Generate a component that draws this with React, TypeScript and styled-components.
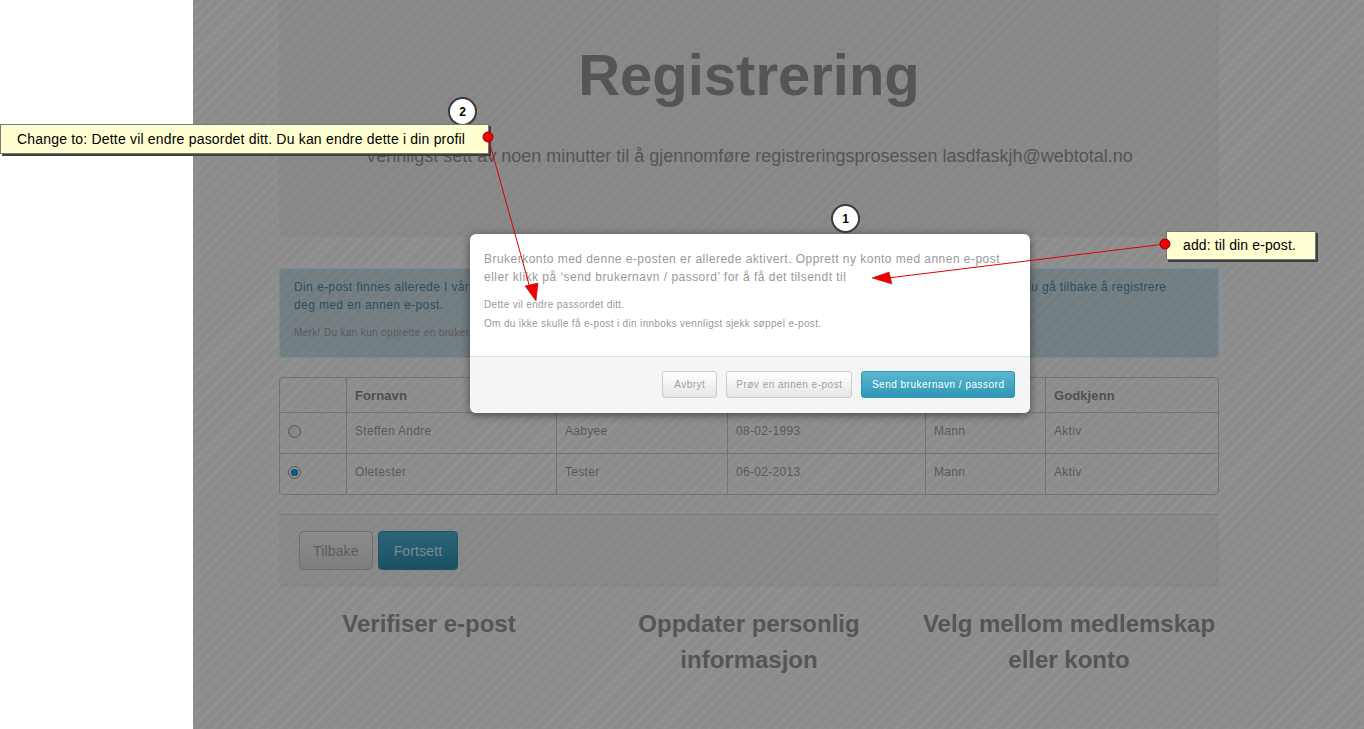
import styled, { createGlobalStyle } from "styled-components";

const GlobalStyle = createGlobalStyle`
  html, body {
    margin: 0;
    height: 100%;
    background: #fff;
    font-family: "Liberation Sans", Arial, sans-serif;
    overflow: hidden;
  }
`;

const Page = styled.div`
  position: relative;
  display: flex;
  width: 1364px;
  height: 729px;
  overflow: hidden;
`;

const Sidebar = styled.div`
  width: 193px;
  flex: none;
  background: #fff;
`;

const Main = styled.main`
  flex: 1;
  padding-left: 86px;
  background: repeating-linear-gradient(135deg, #8c8c8c 0 5.4px, #919191 5.4px 7.8px);
`;

const Container = styled.div`
  width: 940px;
  display: flex;
  flex-direction: column;
`;

const Hero = styled.header`
  height: 237px;
  box-sizing: border-box;
  padding-top: 37px;
  border-radius: 0 0 6px 6px;
  background: rgba(0, 0, 0, 0.035);
  text-align: center;
`;

const Title = styled.h1`
  margin: 0;
  font-size: 58px;
  line-height: 76px;
  font-weight: bold;
  color: #555;
`;

const Lead = styled.p`
  margin: 30px 0 0;
  font-size: 18px;
  line-height: 27px;
  color: #545454;
`;

const Alert = styled.div`
  margin-top: 31px;
  height: 90px;
  box-sizing: border-box;
  padding: 9px 14px;
  border: 1px solid #6f8c97;
  border-radius: 4px;
  background: rgba(25, 75, 90, 0.22);
  color: #2a4f63;
  font-size: 12px;
  line-height: 18px;
  letter-spacing: 0.39px;
  white-space: nowrap;
`;

const AlertNote = styled.p`
  margin: 10px 0 0;
  font-size: 10px;
  letter-spacing: 0.35px;
  color: #5a5a5a;
`;

const Table = styled.table`
  margin-top: 19px;
  width: 940px;
  border-collapse: separate;
  border-spacing: 0;
  table-layout: fixed;
  border: 1px solid #727272;
  border-radius: 4px;
  font-size: 12px;
  letter-spacing: 0.3px;
  color: #595959;
`;

const HeadCell = styled.th`
  height: 34px;
  padding: 0 8px;
  text-align: left;
  font-weight: bold;
  font-size: 13px;
  letter-spacing: 0.1px;
  color: #4f4f4f;
  border-left: 1px solid #727272;
  &:first-child {
    border-left: 0;
  }
`;

const Cell = styled.td`
  height: 35px;
  padding: 0 8px 5px;
  border-top: 1px solid #727272;
  border-left: 1px solid #727272;
  &:first-child {
    border-left: 0;
    padding-bottom: 4px;
  }
`;

const Radio = styled.span<{ $checked?: boolean }>`
  display: block;
  width: 13px;
  height: 13px;
  border-radius: 50%;
  border: 1px solid #555;
  box-sizing: border-box;
  background: ${(p) =>
    p.$checked
      ? "radial-gradient(circle, #0f5a7c 0 3.5px, #8e8e8e 4px)"
      : "radial-gradient(circle at 60% 60%, #8e8e8e, #7c7c7c)"};
`;

const Actions = styled.div`
  margin-top: 19px;
  height: 73px;
  box-sizing: border-box;
  padding: 16px 20px;
  display: flex;
  gap: 5px;
  border-top: 1px solid #7a7a7a;
  background: rgba(0, 0, 0, 0.035);
`;

const PageButton = styled.button<{ $primary?: boolean }>`
  height: 39px;
  padding: 0 ${(p) => (p.$primary ? 15 : 13)}px;
  border-radius: 4px;
  font: 14px "Liberation Sans", Arial, sans-serif;
  letter-spacing: 0.15px;
  border: 1px solid ${(p) => (p.$primary ? "#1f5468" : "#6e6e6e")};
  color: ${(p) => (p.$primary ? "#7d8b90" : "#5d5d5d")};
  background: ${(p) =>
    p.$primary
      ? "linear-gradient(#2a6579, #1b5064)"
      : "linear-gradient(#8b8b8b, #7e7e7e)"};
`;

const Features = styled.section`
  margin-top: 19px;
  display: grid;
  grid-template-columns: repeat(3, 300px);
  column-gap: 20px;
  text-align: center;
`;

const FeatureTitle = styled.h2`
  margin: 0;
  font-size: 24px;
  line-height: 36px;
  font-weight: bold;
  color: #555;
`;

const Modal = styled.div`
  position: absolute;
  left: 470px;
  top: 234px;
  width: 560px;
  height: 179px;
  display: flex;
  flex-direction: column;
  border-radius: 6px;
  background: #fff;
  box-shadow: 0 2px 8px rgba(0, 0, 0, 0.5);
  overflow: hidden;
`;

const ModalBody = styled.div`
  height: 123px;
  box-sizing: border-box;
  padding: 16px 14px 0;
  border-bottom: 1px solid #ddd;
  color: #999;
`;

const ModalLead = styled.p`
  margin: 0 0 9px;
  font-size: 12px;
  line-height: 18px;
  letter-spacing: 0.47px;
`;

const ModalSmall = styled.p`
  margin: 0;
  font-size: 10px;
  line-height: 19px;
  letter-spacing: 0.34px;
`;

const ModalFooter = styled.div`
  flex: 1;
  display: flex;
  justify-content: flex-end;
  align-items: flex-start;
  gap: 9px;
  padding: 14px 15px 0;
  background: #f5f5f5;
`;

const ModalButton = styled.button<{ $primary?: boolean }>`
  height: 27px;
  min-width: 55px;
  padding: 0 ${(p) => (p.$primary ? 9.5 : 9)}px;
  border-radius: 3px;
  font: 10px "Liberation Sans", Arial, sans-serif;
  letter-spacing: 0.5px;
  border: 1px solid ${(p) => (p.$primary ? "#2f96b4" : "#ccc")};
  color: ${(p) => (p.$primary ? "#fff" : "#a0a0a0")};
  background: ${(p) =>
    p.$primary
      ? "linear-gradient(#5bb8d2, #2f96b4)"
      : "linear-gradient(#fff, #e6e6e6)"};
`;

const Note = styled.div<{ $left: number; $top: number; $width: number; $height: number; $spacing: number; $lift: number }>`
  position: absolute;
  left: ${(p) => p.$left}px;
  top: ${(p) => p.$top}px;
  width: ${(p) => p.$width}px;
  height: ${(p) => p.$height}px;
  box-sizing: border-box;
  padding: 0 0 ${(p) => p.$lift}px 16px;
  display: flex;
  align-items: center;
  white-space: nowrap;
  background: #ffffd2;
  border: 1px solid #777;
  box-shadow: 2px 2px 0 #3f3f3f;
  color: #000;
  font-size: 14px;
  letter-spacing: ${(p) => p.$spacing}px;
`;

const Marker = styled.div<{ $left: number; $top: number }>`
  position: absolute;
  left: ${(p) => p.$left}px;
  top: ${(p) => p.$top}px;
  width: 29px;
  height: 29px;
  box-sizing: border-box;
  border-radius: 50%;
  background: #fff;
  border: 2px solid #3a3a3a;
  display: flex;
  align-items: center;
  justify-content: center;
  color: #000;
  font-size: 12px;
  font-weight: bold;
`;

const Arrows = styled.svg`
  position: absolute;
  left: 0;
  top: 0;
  pointer-events: none;
`;

const widths = [66, 210, 171, 198, 120, 173];
const heads = ["", "Fornavn", "Etternavn", "Fødselsdato", "Kjønn", "Godkjenn"];
const rows = [
  { checked: false, cells: ["Steffen Andre", "Aabyee", "08-02-1993", "Mann", "Aktiv"] },
  { checked: true, cells: ["Oletester", "Tester", "06-02-2013", "Mann", "Aktiv"] },
];

export default function App() {
  return (
    <Page>
      <GlobalStyle />
      <Sidebar />
      <Main>
        <Container>
          <Hero>
            <Title>Registrering</Title>
            <Lead>Vennligst sett av noen minutter til å gjennomføre registreringsprosessen lasdfaskjh@webtotal.no</Lead>
          </Hero>
          <Alert>
            Din e-post finnes allerede I vårt system. Du kan logge inn med denne e-posten for å fortsette registreringen din her, eller så kan du gå tilbake å registrere
            <br />
            deg med en annen e-post.
            <AlertNote>Merk! Du kan kun opprette en bruker per e-post.</AlertNote>
          </Alert>
          <Table>
            <colgroup>
              {widths.map((w, i) => (
                <col key={i} style={{ width: w }} />
              ))}
            </colgroup>
            <thead>
              <tr>
                {heads.map((h, i) => (
                  <HeadCell key={i}>{h}</HeadCell>
                ))}
              </tr>
            </thead>
            <tbody>
              {rows.map((r) => (
                <tr key={r.cells[0]}>
                  <Cell>
                    <Radio $checked={r.checked} />
                  </Cell>
                  {r.cells.map((c) => (
                    <Cell key={c}>{c}</Cell>
                  ))}
                </tr>
              ))}
            </tbody>
          </Table>
          <Actions>
            <PageButton>Tilbake</PageButton>
            <PageButton $primary>Fortsett</PageButton>
          </Actions>
          <Features>
            <FeatureTitle>Verifiser e-post</FeatureTitle>
            <FeatureTitle>Oppdater personlig informasjon</FeatureTitle>
            <FeatureTitle>Velg mellom medlemskap eller konto</FeatureTitle>
          </Features>
        </Container>
      </Main>

      <Modal>
        <ModalBody>
          <ModalLead>
            Brukerkonto med denne e-posten er allerede aktivert. Opprett ny konto med annen e-post
            <br />
            eller klikk på ‘send brukernavn / passord’ for å få det tilsendt til
          </ModalLead>
          <ModalSmall>Dette vil endre passordet ditt.</ModalSmall>
          <ModalSmall>Om du ikke skulle få e-post i din innboks vennligst sjekk søppel e-post.</ModalSmall>
        </ModalBody>
        <ModalFooter>
          <ModalButton>Avbryt</ModalButton>
          <ModalButton>Prøv en annen e-post</ModalButton>
          <ModalButton $primary>Send brukernavn / passord</ModalButton>
        </ModalFooter>
      </Modal>

      <Marker $left={448} $top={97}>2</Marker>
      <Marker $left={831} $top={204}>1</Marker>
      <Note $left={0} $top={124} $width={489} $height={30} $spacing={0.19} $lift={0}>
        Change to: Dette vil endre pasordet ditt. Du kan endre dette i din profil
      </Note>
      <Note $left={1166} $top={231} $width={150} $height={29} $spacing={0.12} $lift={2}>
        add: til din e-post.
      </Note>

      <Arrows width="1364" height="729" viewBox="0 0 1364 729">
        <path d="M488 137 L530 288" stroke="#e00000" strokeWidth="1" fill="none" />
        <path d="M1165 244 L888 278" stroke="#e00000" strokeWidth="1" fill="none" />
        <path d="M536 301 L525 286 L538 283 Z" fill="#f00000" stroke="#a00000" strokeWidth="0.5" />
        <path d="M872 278 L889 272 L892 284 Z" fill="#f00000" stroke="#a00000" strokeWidth="0.5" />
        <circle cx="488" cy="137" r="5" fill="#f00000" stroke="#900000" />
        <circle cx="1165" cy="244" r="5" fill="#f00000" stroke="#900000" />
      </Arrows>
    </Page>
  );
}
